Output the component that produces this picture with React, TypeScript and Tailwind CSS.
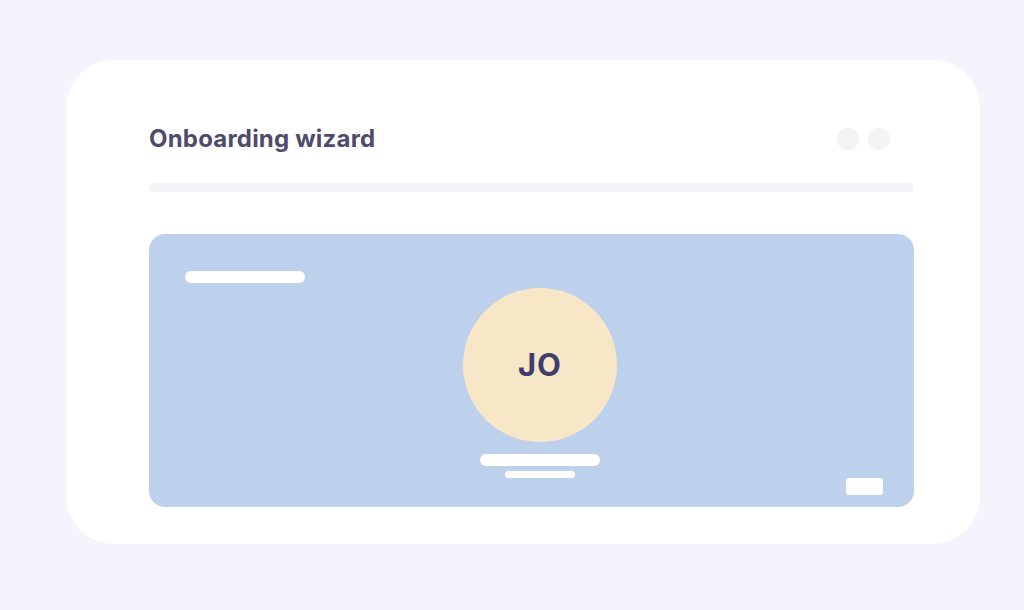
export default function App() {
  return (
    <div className="w-[1024px] h-[610px] bg-[#f4f5fc] pt-[60px] pl-[66px] font-['Inter',sans-serif]">
      <div className="w-[914px] h-[484px] bg-white rounded-[48px] pt-[66px] pl-[83px] pr-[66px]">
        {/* header */}
        <div className="flex items-center justify-between h-[26px]">
          <h1 className="text-[24px] leading-[26px] font-bold tracking-[0.2px] text-[#4d4c6d]">Onboarding wizard</h1>
          <div className="flex gap-[9px] mr-[24px]">
            <div className="w-[22px] h-[22px] rounded-full bg-[#f3f3f5]" />
            <div className="w-[22px] h-[22px] rounded-full bg-[#f3f3f5]" />
          </div>
        </div>
        <div className="mt-[31px] h-[9px] rounded-full bg-[#f4f4f6]" />
        {/* preview panel */}
        <div className="mt-[42px] h-[273px] rounded-[16px] bg-[#bed1ec] pt-[37px] pl-[36px] pr-[31px]">
          <div className="w-[120px] h-[12px] rounded-full bg-white" />
          <div className="flex flex-col items-center pl-[12px]">
            <div className="mt-[5px] w-[154px] h-[154px] rounded-full bg-[#f8e7c6] flex items-center justify-center">
              <span className="text-[31px] font-bold text-[#403e6c] tracking-[1px]">JO</span>
            </div>
            <div className="mt-[12px] w-[120px] h-[12px] rounded-full bg-white" />
            <div className="mt-[5px] w-[70px] h-[7px] rounded-full bg-white" />
          </div>
          <div className="flex justify-end">
            <div className="w-[37px] h-[17px] rounded-[3px] bg-white" />
          </div>
        </div>
      </div>
    </div>
  );
}
